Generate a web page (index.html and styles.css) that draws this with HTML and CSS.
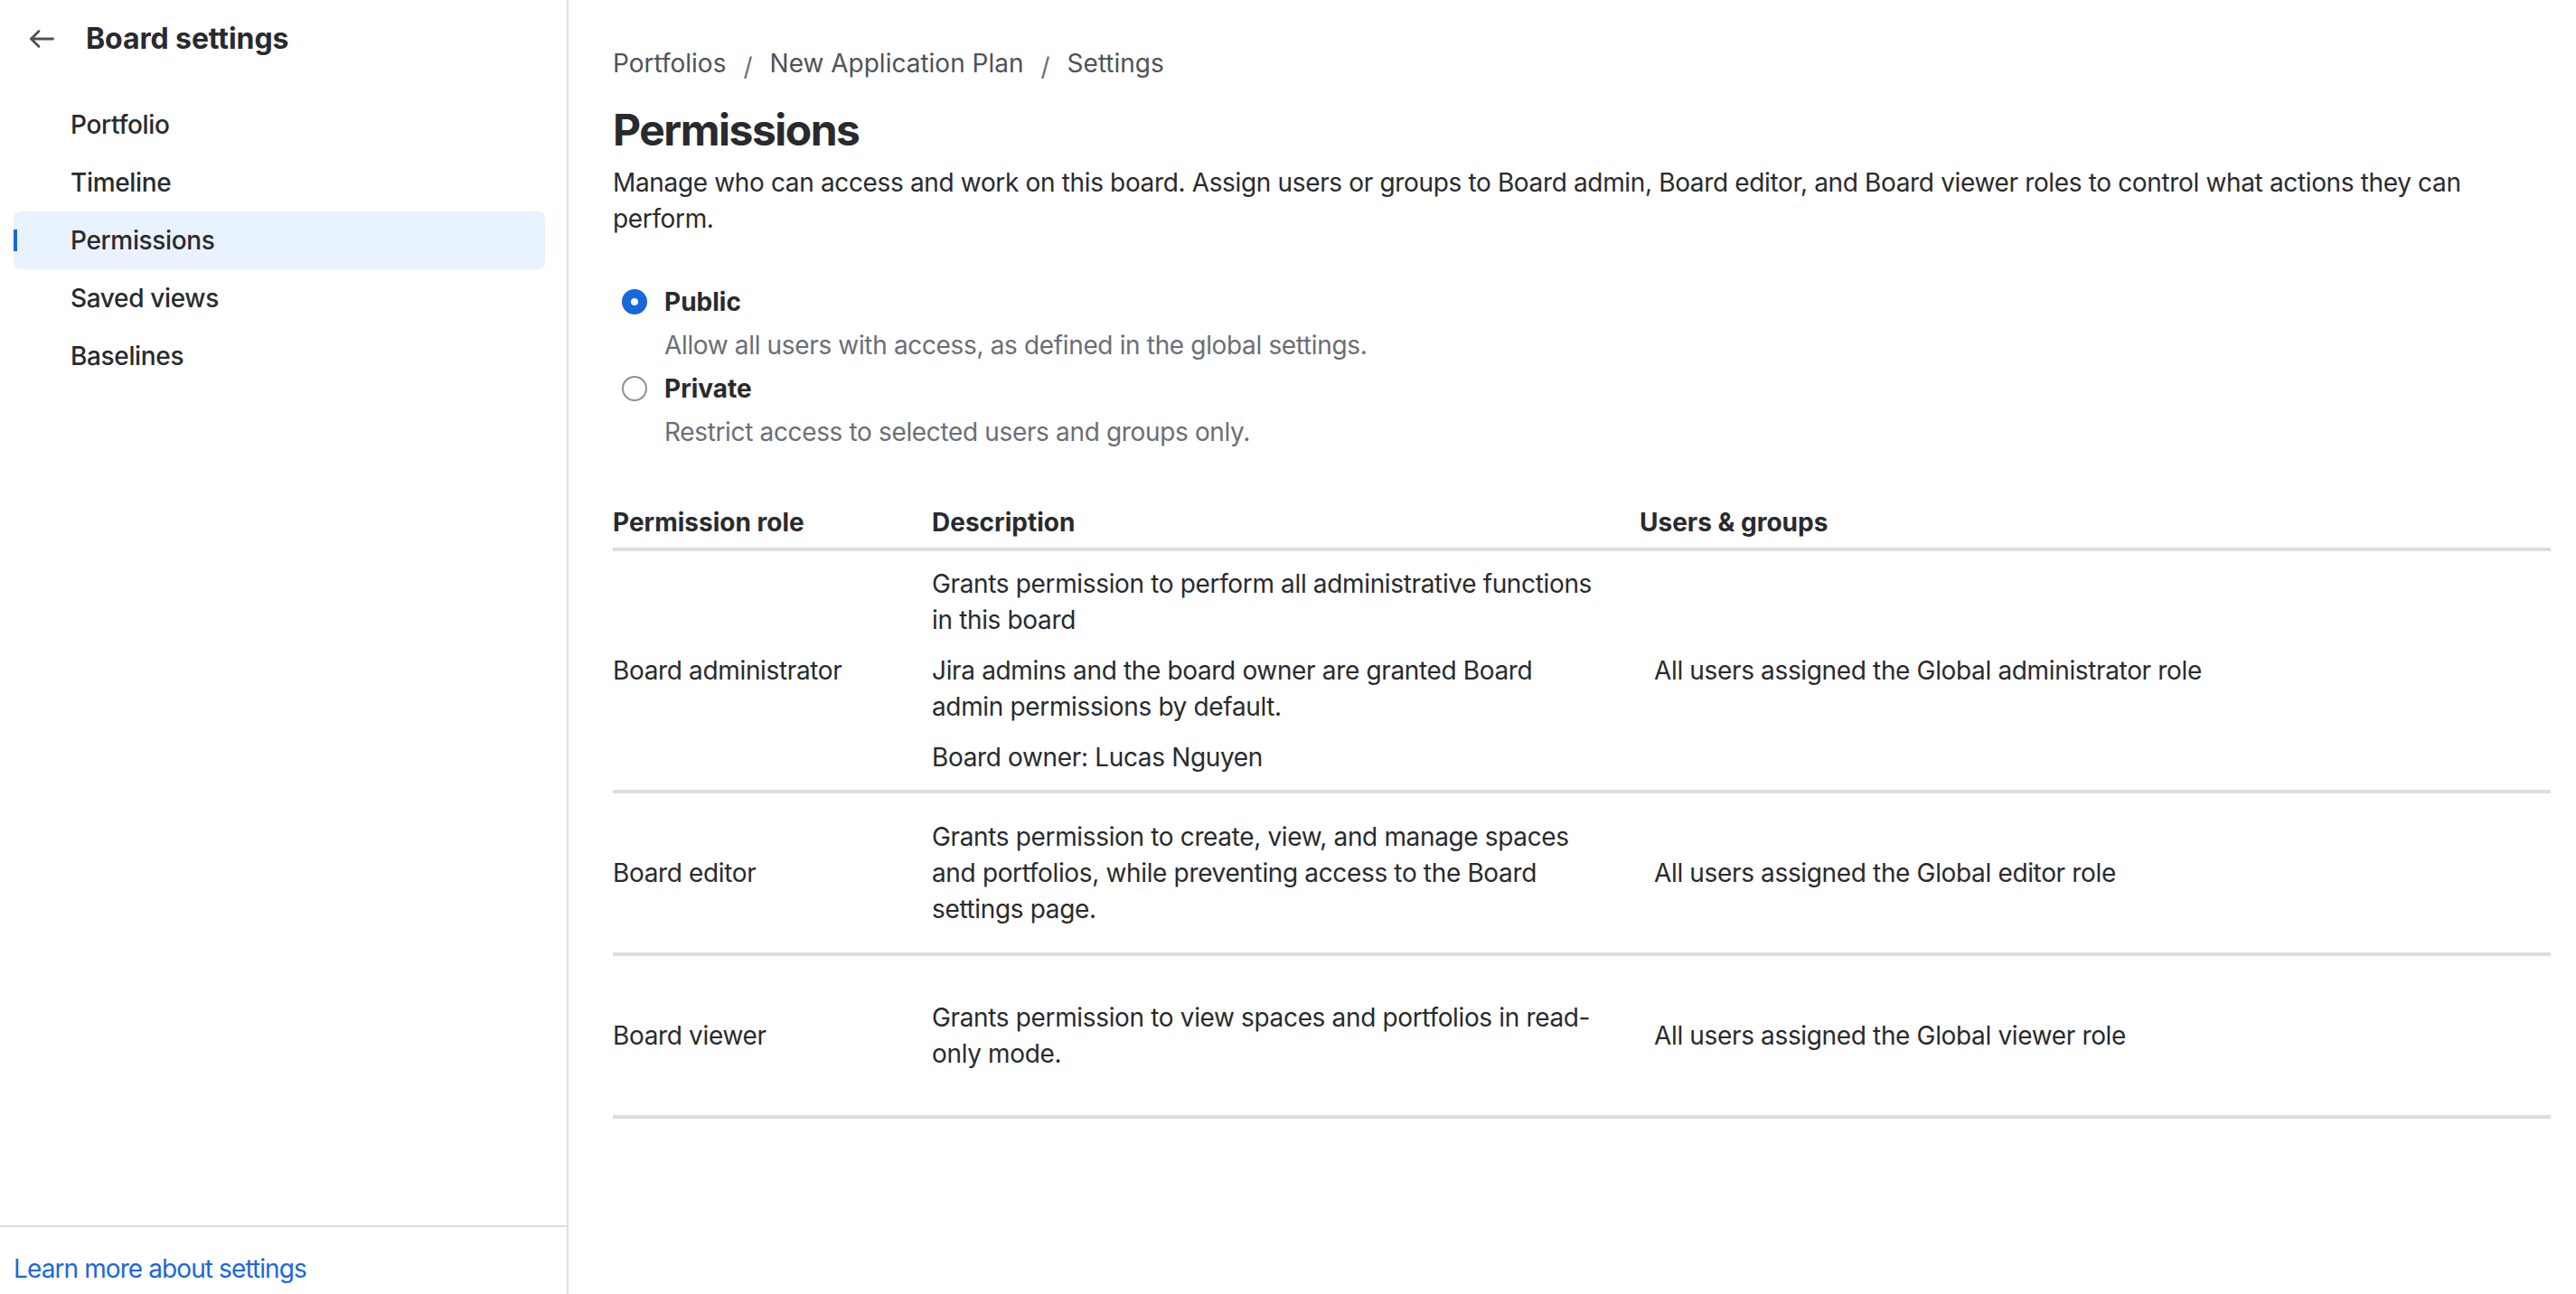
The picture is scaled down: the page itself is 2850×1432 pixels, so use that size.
FILE: index.html
```html
<!DOCTYPE html>
<html lang="en">
<head>
<meta charset="utf-8">
<title>Board settings - Permissions</title>
<link rel="stylesheet" href="styles.css">
</head>
<body>
<div class="app">
  <aside class="sidebar">
    <div class="side-header">
      <button class="back" aria-label="Back">
        <svg width="28" height="22" viewBox="0 0 28 22" fill="none" stroke="currentColor" stroke-width="2.8" stroke-linecap="round" stroke-linejoin="round"><path d="M26.5 11H2.5"/><path d="M11 2.5L2.5 11L11 19.5"/></svg>
      </button>
      <h2 class="side-title">Board settings</h2>
    </div>
    <nav class="side-nav">
      <a class="nav-item">Portfolio</a>
      <a class="nav-item">Timeline</a>
      <a class="nav-item active">Permissions</a>
      <a class="nav-item">Saved views</a>
      <a class="nav-item">Baselines</a>
    </nav>
    <div class="side-footer">
      <a class="learn-link">Learn more about settings</a>
    </div>
  </aside>

  <main class="main">
    <nav class="crumbs">
      <a class="crumb">Portfolios</a>
      <span class="sep">/</span>
      <a class="crumb">New Application Plan</a>
      <span class="sep">/</span>
      <a class="crumb">Settings</a>
    </nav>
    <h1 class="page-title">Permissions</h1>
    <p class="intro">Manage who can access and work on this board. Assign users or groups to Board admin, Board editor, and Board viewer roles to control what actions they can perform.</p>

    <div class="radios">
      <div class="option">
        <div class="option-row">
          <span class="radio checked"></span>
          <span class="option-label">Public</span>
        </div>
        <div class="option-help">Allow all users with access, as defined in the global settings.</div>
      </div>
      <div class="option">
        <div class="option-row">
          <span class="radio"></span>
          <span class="option-label">Private</span>
        </div>
        <div class="option-help">Restrict access to selected users and groups only.</div>
      </div>
    </div>

    <div class="table">
      <div class="thead">
        <div class="th">Permission role</div>
        <div class="th">Description</div>
        <div class="th">Users &amp; groups</div>
      </div>
      <div class="tr">
        <div class="td">Board administrator</div>
        <div class="td desc">
          <p>Grants permission to perform all administrative functions in this board</p>
          <p>Jira admins and the board owner are granted Board admin permissions by default.</p>
          <p>Board owner: Lucas Nguyen</p>
        </div>
        <div class="td users">All users assigned the Global administrator role</div>
      </div>
      <div class="tr">
        <div class="td">Board editor</div>
        <div class="td desc">
          <p>Grants permission to create, view, and manage spaces and portfolios, while preventing access to the Board settings page.</p>
        </div>
        <div class="td users">All users assigned the Global editor role</div>
      </div>
      <div class="tr">
        <div class="td">Board viewer</div>
        <div class="td desc">
          <p>Grants permission to view spaces and portfolios in read-only mode.</p>
        </div>
        <div class="td users">All users assigned the Global viewer role</div>
      </div>
    </div>
  </main>
</div>
</body>
</html>
```

FILE: styles.css
```css
* { box-sizing: border-box; }

html, body {
  margin: 0;
  padding: 0;
  background: #ffffff;
}

body {
  font-family: Inter, "Noto Sans", "Liberation Sans", sans-serif;
  font-size: 28px;
  line-height: 40px;
  letter-spacing: -0.35px;
  color: #292A2E;
}

.app {
  display: flex;
  height: 100vh;
}

/* ---------- Sidebar ---------- */
.sidebar {
  width: 629px;
  flex: none;
  display: flex;
  flex-direction: column;
  border-right: 2px solid #DDDEE1;
}

.side-header {
  height: 86px;
  display: flex;
  align-items: center;
  padding-left: 32px;
}

.back {
  border: 0;
  background: none;
  padding: 0;
  width: 28px;
  height: 22px;
  color: #505258;
  display: flex;
}

.side-title {
  margin: 0 0 0 35px;
  font-size: 32px;
  line-height: 40px;
  font-weight: 700;
  letter-spacing: -0.1px;
  color: #292A2E;
}

.side-nav {
  margin-top: 20px;
  padding: 0 24px 0 15px;
  display: flex;
  flex-direction: column;
}

.nav-item {
  position: relative;
  height: 64px;
  display: flex;
  align-items: center;
  padding-left: 63px;
  border-radius: 8px;
  color: #292A2E;
  font-weight: 500;
}

.nav-item.active {
  background: #E9F2FF;
}

.nav-item.active::before {
  content: "";
  position: absolute;
  left: 0;
  top: 20px;
  width: 4px;
  height: 24px;
  background: #1868DB;
}

.side-footer {
  margin-top: auto;
  border-top: 2px solid #DDDEE1;
  height: 76px;
  padding: 26px 0 0 15px;
}

.learn-link {
  color: #1868DB;
  letter-spacing: -0.9px;
}

/* ---------- Main ---------- */
.main {
  flex: 1;
  min-width: 0;
  padding: 50px 28px 0 49px;
}

.crumbs {
  display: flex;
  align-items: center;
  color: #505258;
  letter-spacing: 0;
}

.sep {
  margin: 0 19px;
  color: #6B6E76;
  position: relative;
  top: 4px;
}

.page-title {
  margin: 26px 0 0;
  font-size: 48px;
  line-height: 56px;
  font-weight: 700;
  letter-spacing: -1.5px;
  color: #292A2E;
}

.intro {
  margin: 10px 0 0;
}

.radios {
  margin-top: 52px;
  display: flex;
  flex-direction: column;
  gap: 8px;
}

.option-row {
  display: flex;
  align-items: center;
}

.radio {
  width: 28px;
  height: 28px;
  border-radius: 50%;
  border: 2px solid #8C8F97;
  margin: 0 19px 0 10px;
  background: #fff;
  flex: none;
}

.radio.checked {
  border: 10px solid #1868DB;
  background: #fff;
}

.option-label {
  font-weight: 700;
  letter-spacing: 0;
}

.option-help {
  margin-top: 8px;
  padding-left: 57px;
  color: #6B6E76;
}

/* ---------- Table ---------- */
.table {
  margin-top: 60px;
}

.thead,
.tr {
  display: grid;
  grid-template-columns: 353px 783px 1fr;
  border-bottom: 4px solid #DDDEE1;
}

.thead {
  padding-bottom: 8px;
}

.th {
  font-weight: 700;
  letter-spacing: 0;
}

.tr {
  min-height: 180px;
  align-items: center;
  padding: 16px 0;
}

.td.desc {
  padding-right: 42px;
}

.td.desc p {
  margin: 0;
}

.td.desc p + p {
  margin-top: 16px;
}

.td.users {
  padding-left: 16px;
}
```
